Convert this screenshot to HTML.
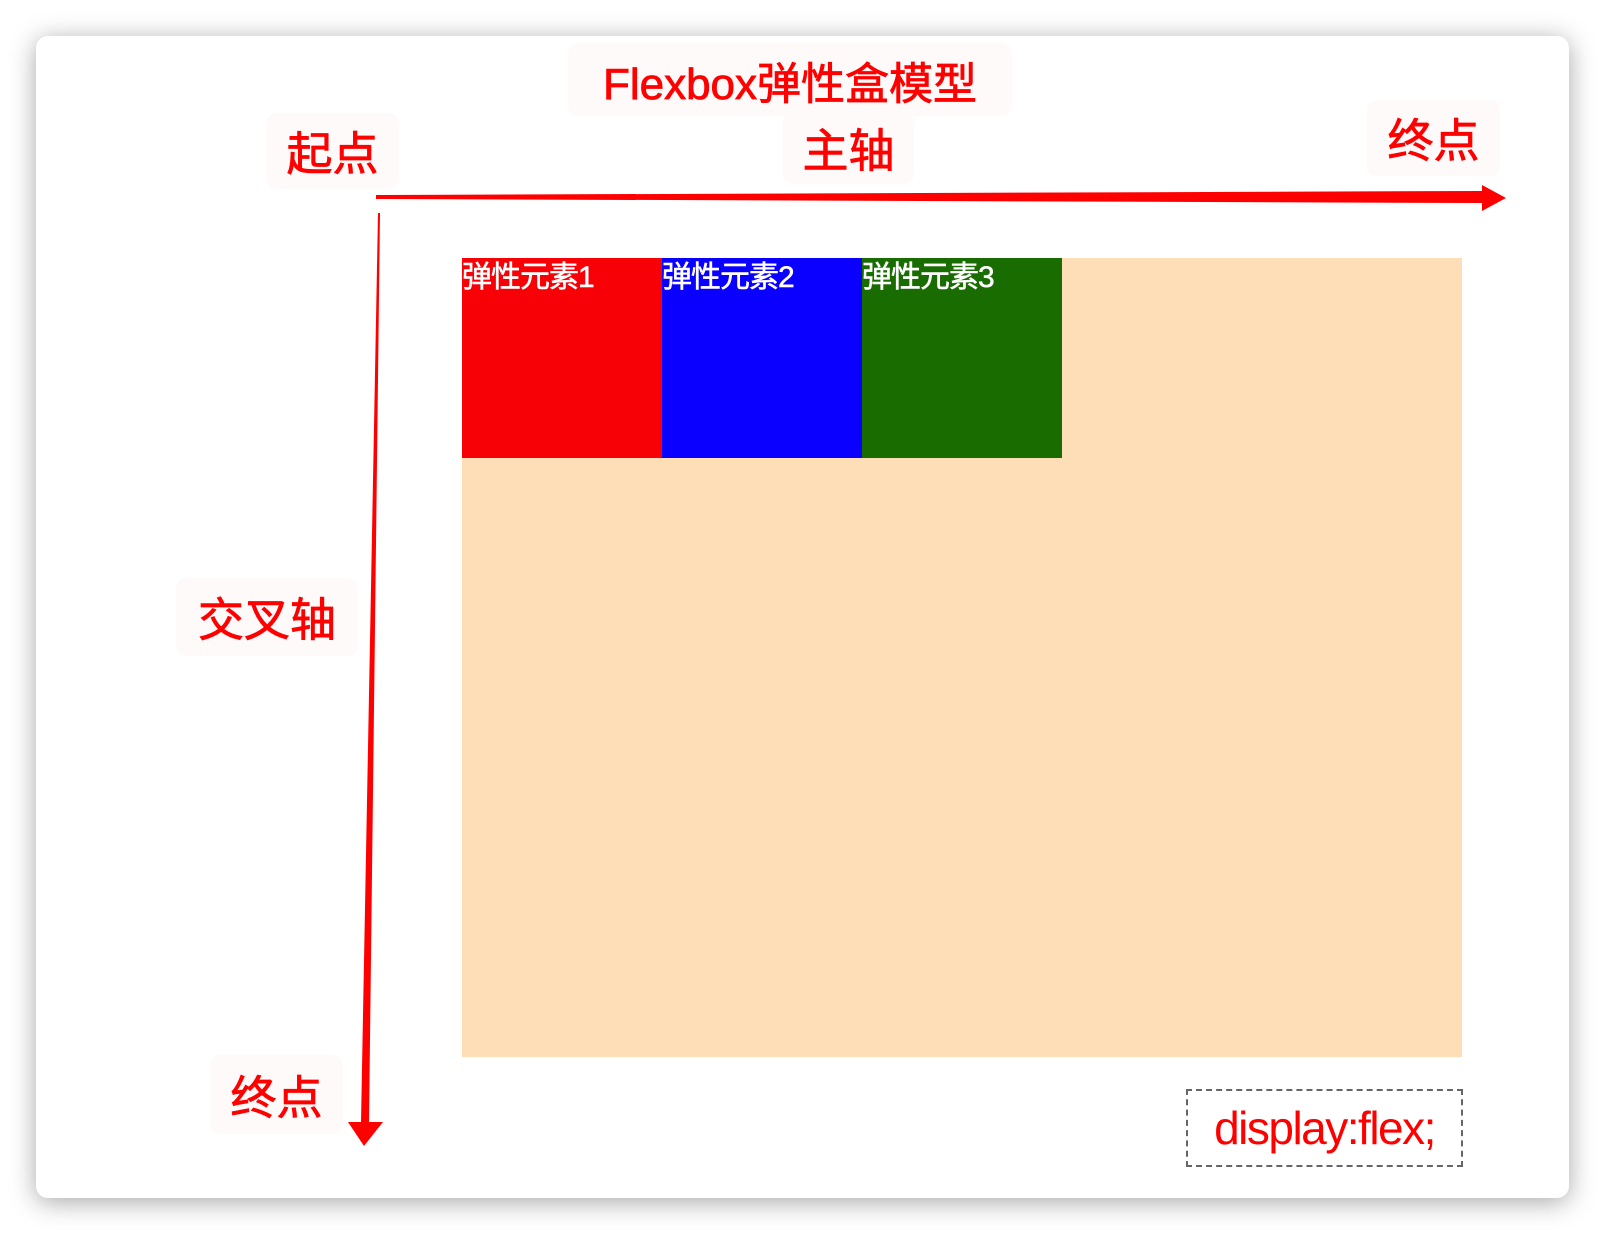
<!DOCTYPE html>
<html><head><meta charset="utf-8"><style>
html,body{margin:0;padding:0;width:1606px;height:1236px;background:#fff;overflow:hidden;position:relative;font-family:"Liberation Sans","Noto Sans CJK SC",sans-serif}
.card{position:absolute;left:36px;top:36px;width:1533px;height:1162px;background:#fff;border-radius:12px;box-shadow:0 4px 26px rgba(0,0,0,.35)}
.lab{position:absolute;background:#fffafa;border-radius:10px;color:#f00;display:flex;align-items:center;justify-content:center;white-space:nowrap;-webkit-text-stroke:0.8px #f00}
.flex{position:absolute;left:462px;top:258px;width:1000px;height:799px;background:#fddeb6;display:flex}
.it{width:200px;height:200px;color:#fff;font-size:30px;line-height:40px;letter-spacing:-1px;-webkit-text-stroke:0.5px #fff}
.dash{position:absolute;left:1186px;top:1089px;width:273px;height:74px;border:2px dashed #666;color:#f00;font-size:46px;display:flex;align-items:center;justify-content:center;letter-spacing:-1.5px}
</style></head><body>
<div class="card"></div>
<div class="lab" style="left:568px;top:43px;width:444px;height:73px;font-size:44px;">Flexbox弹性盒模型</div>
<div class="lab" style="left:266px;top:113px;width:133px;height:76px;font-size:46px;">起点</div>
<div class="lab" style="left:783px;top:112px;width:131px;height:72px;font-size:46px;">主轴</div>
<div class="lab" style="left:1367px;top:100px;width:133px;height:76px;font-size:46px;">终点</div>
<div class="lab" style="left:176px;top:578px;width:182px;height:78px;font-size:46px;">交叉轴</div>
<div class="lab" style="left:210px;top:1055px;width:133px;height:79px;font-size:46px;">终点</div>
<svg style="position:absolute;left:0;top:0" width="1606" height="1236">
<polygon points="376,195 1482,191 1482,185 1506,198 1482,211 1482,203 376,199" fill="#f00"/>
<polygon points="378,213 380,213 369,1122 383,1122 364,1146 348,1122 361,1122" fill="#f00"/>
</svg>
<div class="flex">
<div class="it" style="background:#f70006">弹性元素1</div>
<div class="it" style="background:#0a00ff">弹性元素2</div>
<div class="it" style="background:#186c00">弹性元素3</div>
</div>
<div class="dash">display:flex;</div>
</body></html>
